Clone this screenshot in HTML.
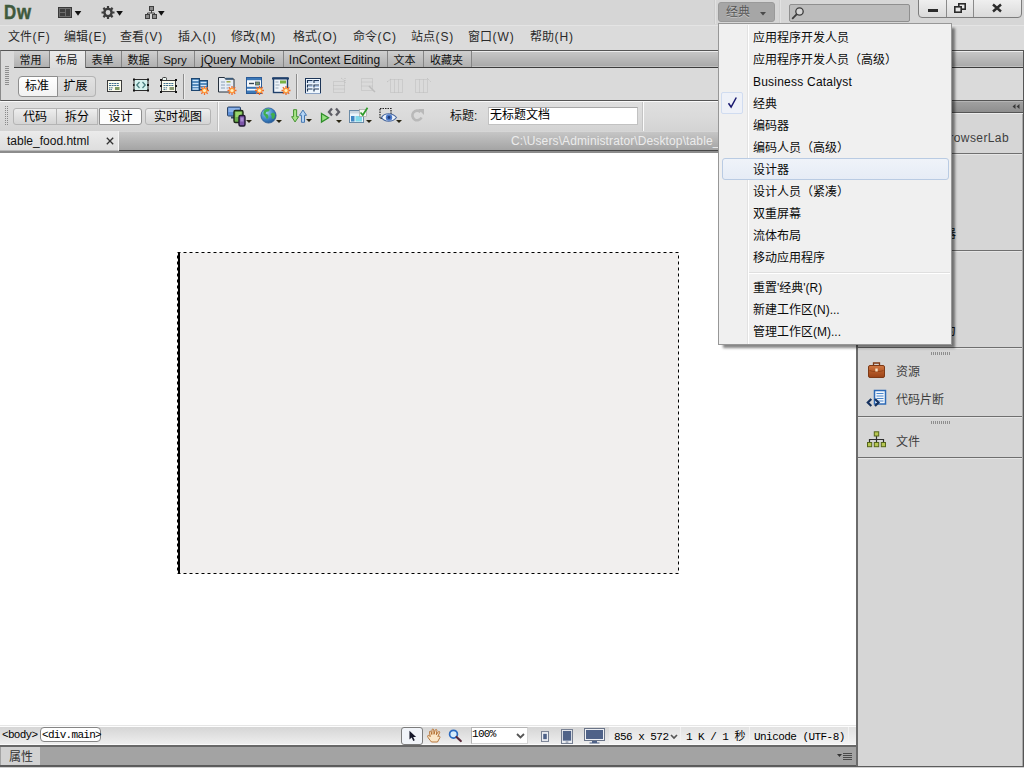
<!DOCTYPE html>
<html lang="zh-CN">
<head>
<meta charset="utf-8">
<title>Dreamweaver</title>
<style>
*{box-sizing:border-box;margin:0;padding:0}
html,body{width:1024px;height:768px;overflow:hidden;background:#d6d6d6}
body{position:relative;font-family:"Liberation Sans","Noto Sans CJK SC",sans-serif;font-size:12px;color:#1a1a1a}
.abs{position:absolute}
.t{position:absolute;white-space:nowrap;line-height:16px;height:16px}
svg{position:absolute;overflow:visible}
/* title bar */
#titlebar{left:0;top:0;width:1024px;height:25px;background:#d6d6d6}
#menubar{left:0;top:25px;width:1024px;height:25px;background:#dbdbdb;border-top:1px solid #e4e4e4}
.menu{top:29px;color:#2a2a2a}.k{letter-spacing:.9px;margin-left:.5px}
#logo{left:0;top:-2px;font-size:21px;font-weight:bold;color:#3f5a3d;line-height:28px;height:28px;-webkit-text-stroke:.5px #3f5a3d}#logo span{position:absolute;top:0;display:block;transform-origin:0 0}
#wsbtn{left:718px;top:2px;width:57px;height:20px;background:#a6a6a6;border:1px solid #9a9a9a;border-radius:3px}
#search{left:789px;top:4px;width:121px;height:18px;background:#bcbcbc;border:1px solid #8f8f8f;border-radius:2px}
#winbtns{left:918px;top:-1px;width:104px;height:19px;border:1px solid #7d7d7d;border-radius:0 0 4px 4px;background:linear-gradient(#efefef,#dadada)}
/* insert bar */
#insertbar{left:0;top:50px;width:1024px;height:51px;background:#dadada;border-top:1px solid #555;border-bottom:1px solid #555;border-left:1px solid #8a8a8a;border-right:1px solid #555}
#tabstrip{left:14px;top:51px;width:1009px;height:17px;background:linear-gradient(#ececec 0 1px,#c6c6c6 1px,#aaaaaa 15px,#c0c0c0 15px 16px);border-bottom:1px solid #3c3c3c}
.itab{position:absolute;top:51px;height:16px;border-right:1px solid #858585;background:linear-gradient(#cfcfcf,#b0b0b0);text-align:center;line-height:19px;font-size:11px;overflow:hidden;padding-right:2px;color:#111;white-space:nowrap}
.itab.on{background:linear-gradient(#ebebeb,#dcdcdc);height:17px;border-right:1px solid #777}
.grip{position:absolute;width:5px;background:repeating-linear-gradient(#8f8f8f 0 1px,transparent 1px 2px)}
.seg{position:absolute;top:76px;height:21px;border:1px solid #b4b4b4;text-align:center;line-height:18px;color:#000;padding-right:2px;background:linear-gradient(#e2e2e2,#d4d4d4)}
.vsep{position:absolute;width:2px;border-left:1px solid #8c8c8c;border-right:1px solid #ececec}
</style>
</head>
<body>
<!-- ============ title bar ============ -->
<div id="titlebar" class="abs"></div>
<div id="logo" class="t"><span style="left:3.600px;transform:scaleX(.8)">D</span><span style="left:16.800px;transform:scaleX(.86)">w</span></div>
<!-- layout icon -->
<svg style="left:58px;top:7px" width="22" height="12" viewBox="0 0 22 12">
  <rect x="0.5" y="0.5" width="13" height="10" fill="#6e6e6e" stroke="#3a3a3a"/>
  <rect x="2" y="2" width="5" height="3" fill="#3f3f3f"/><rect x="2" y="6" width="5" height="3" fill="#3f3f3f"/><rect x="8" y="2" width="4" height="7" fill="#3f3f3f"/>
  <path d="M16.700 4h6.600l-3.300 4.800z" fill="#111"/>
</svg>
<!-- gear -->
<svg style="left:102px;top:6px" width="22" height="13" viewBox="0 0 22 13">
  <circle cx="6" cy="6.5" r="3.6" fill="none" stroke="#3c3c3c" stroke-width="2.4"/>
  <g stroke="#3c3c3c" stroke-width="2.2"><path d="M6 0v2.4M6 10.6V13M-.5 6.5h2.4M10.1 6.5h2.4M1.4 1.9l1.7 1.7M8.9 9.4l1.7 1.7M1.4 11.1l1.7-1.7M8.9 3.6l1.7-1.7"/></g>
  <path d="M14.300 5h6.600l-3.300 4.800z" fill="#111"/>
</svg>
<!-- site -->
<svg style="left:145px;top:6px" width="22" height="13" viewBox="0 0 22 13">
  <g fill="#8a8a8a" stroke="#3f3f3f"><rect x="4.5" y="0.5" width="4" height="4"/><rect x="0.5" y="8.5" width="4" height="4"/><rect x="7.500" y="8.5" width="4" height="4"/></g>
  <path d="M6.5 5v2M2.500 8.500V7h7v1.500" fill="none" stroke="#3f3f3f"/>
  <path d="M13 5h6.600l-3.300 4.800z" fill="#111"/>
</svg>
<div class="abs" style="left:714px;top:0;width:2px;height:24px;border-left:1px solid #cdcdcd;border-right:1px solid #e2e2e2"></div>
<div class="abs" style="left:779px;top:0;width:2px;height:24px;border-left:1px solid #cdcdcd;border-right:1px solid #e2e2e2"></div>
<div id="wsbtn" class="abs"></div>
<div class="t" style="left:726px;top:4px;color:#585858;text-shadow:0 1px 0 #c4c4c4">经典</div>
<svg style="left:760px;top:12px" width="6" height="4"><path d="M0 0h6l-3 3.500z" fill="#4a4a4a"/></svg>
<div id="search" class="abs"></div>
<svg style="left:791px;top:6px" width="14" height="14" viewBox="0 0 14 14"><circle cx="8.500" cy="5.500" r="3.700" fill="#d4d4d4" stroke="#3c3c3c" stroke-width="1.300"/><path d="M5.800 8.200L1.200 12.800" stroke="#3c3c3c" stroke-width="1.800"/></svg>
<div id="winbtns" class="abs"></div>
<div class="abs" style="left:946px;top:0;width:1px;height:17px;background:#8a8a8a"></div>
<div class="abs" style="left:973px;top:0;width:1px;height:17px;background:#8a8a8a"></div>
<div class="abs" style="left:928px;top:9px;width:10px;height:3px;background:#2b2b2b"></div>
<svg style="left:954px;top:3px" width="12" height="10" viewBox="0 0 12 10"><rect x="4.800" y="0.800" width="6.400" height="5.400" fill="none" stroke="#2b2b2b" stroke-width="1.600"/><rect x="0.800" y="3.800" width="6.400" height="5.400" fill="#e6e6e6" stroke="#2b2b2b" stroke-width="1.600"/></svg>
<svg style="left:992px;top:4px" width="10" height="8" viewBox="0 0 10 8"><path d="M1 0.500L9 7.500M9 0.500L1 7.500" stroke="#2b2b2b" stroke-width="2.400"/></svg>

<!-- ============ menu bar ============ -->
<div id="menubar" class="abs"></div>
<div class="t menu" style="left:8px">文件<span class="k">(F)</span></div>
<div class="t menu" style="left:64px">编辑<span class="k">(E)</span></div>
<div class="t menu" style="left:120px">查看<span class="k">(V)</span></div>
<div class="t menu" style="left:178px">插入<span class="k">(I)</span></div>
<div class="t menu" style="left:231px">修改<span class="k">(M)</span></div>
<div class="t menu" style="left:293px">格式<span class="k">(O)</span></div>
<div class="t menu" style="left:353px">命令<span class="k">(C)</span></div>
<div class="t menu" style="left:411px">站点<span class="k">(S)</span></div>
<div class="t menu" style="left:468px">窗口<span class="k">(W)</span></div>
<div class="t menu" style="left:530px">帮助<span class="k">(H)</span></div>

<!-- ============ insert bar ============ -->
<div id="insertbar" class="abs"></div>
<div id="tabstrip" class="abs"></div>
<div class="itab" style="left:14px;width:36px">常用</div>
<div class="itab on" style="left:50px;width:36px">布局</div>
<div class="itab" style="left:86px;width:36px">表单</div>
<div class="itab" style="left:122px;width:36px">数据</div>
<div class="itab" style="left:158px;width:37px;font-size:11.500px;line-height:18px">Spry</div>
<div class="itab" style="left:195px;width:89px;font-size:12px;line-height:18px">jQuery Mobile</div>
<div class="itab" style="left:284px;width:104px;font-size:12px;line-height:18px">InContext Editing</div>
<div class="itab" style="left:388px;width:36px">文本</div>
<div class="itab" style="left:424px;width:48px">收藏夹</div>
<div class="grip" style="left:5px;top:66px;height:20px;width:4px"></div>
<div class="seg" style="left:18px;width:40px;background:linear-gradient(#ffffff,#f2f2f2);border-radius:4px 0 0 4px;border-color:#8e8e8e">标准</div>
<div class="seg" style="left:57px;width:39px;border-radius:0 4px 4px 0;border-left-color:#8e8e8e">扩展</div>
<!-- insert bar icons -->
<svg style="left:107px;top:80px" width="15" height="12" viewBox="0 0 15 12">
  <rect x="0.500" y="0.500" width="14" height="11" fill="#fbfbee" stroke="#3a3a3a"/>
  <path d="M2 3.500h10M2 5.500h10" stroke="#3f6f8f" stroke-dasharray="2 .6"/>
  <path d="M2 7.800h4M2 9.600h3" stroke="#3f6f8f" stroke-dasharray="1.500 .6"/>
  <rect x="8" y="7" width="4.500" height="3" fill="#7f9a62"/>
</svg>
<svg style="left:133px;top:78px" width="16" height="14" viewBox="0 0 16 14">
  <rect x="1" y="1.500" width="14" height="11" fill="#d6f2ef" stroke="#2a2a2a"/>
  <path d="M6.500 4L3.800 7l2.700 3M9.500 4l2.700 3-2.700 3" fill="none" stroke="#4c8080" stroke-width="1.300"/>
  <g fill="#111"><rect x="0" y="0.500" width="2" height="2"/><rect x="14" y="0.500" width="2" height="2"/><rect x="0" y="11.500" width="2" height="2"/><rect x="14" y="11.500" width="2" height="2"/><rect x="14" y="6" width="2" height="2"/><rect x="0" y="6" width="1.500" height="2"/></g>
</svg>
<svg style="left:160px;top:77px" width="17" height="16" viewBox="0 0 17 16">
  <rect x="2.500" y="0.500" width="4" height="3" rx="1" fill="#e8f2ee" stroke="#3a3a3a"/>
  <rect x="1.500" y="3.500" width="14" height="11" fill="#fbfbee" stroke="#3a3a3a"/>
  <path d="M3.500 6.500h10M3.500 8.500h10" stroke="#3f6f8f" stroke-dasharray="2 .6"/>
  <path d="M3.500 10.800h4M3.500 12.600h3" stroke="#3f6f8f" stroke-dasharray="1.500 .6"/>
  <rect x="9.500" y="10" width="4.500" height="3" fill="#8a9a72"/>
  <g fill="#111"><rect x="0" y="2" width="2" height="2"/><rect x="15" y="2" width="2" height="2"/><rect x="0" y="14" width="2" height="2"/><rect x="15" y="14" width="2" height="2"/><rect x="0" y="8" width="2" height="2"/><rect x="15" y="8" width="2" height="2"/></g>
</svg>
<div class="vsep" style="left:183px;top:74px;height:25px"></div>
<!-- spry menu bar -->
<svg style="left:191px;top:78px" width="19" height="18" viewBox="0 0 19 18">
  <rect x="0.500" y="0.500" width="8" height="12" fill="#2f6ea8" stroke="#1d4670"/>
  <path d="M1.500 2.500h6M1.500 5.500h6M1.500 8.500h6M1.500 11h6" stroke="#cfe6fb" stroke-width="1.600"/>
  <rect x="8.500" y="2.500" width="8" height="9" fill="#2f6ea8" stroke="#1d4670"/>
  <path d="M9.500 4.500h6M9.500 7.500h6M9.500 10h6" stroke="#cfe6fb" stroke-width="1.600"/>
  <g transform="translate(13.500 12.500)"><path d="M0-4.500v9M-4.500 0h9M-3.200-3.200l6.400 6.400M-3.200 3.200l6.400-6.400" stroke="#ee6a2a" stroke-width="1.300"/><circle r="2.800" fill="#ff9a3c"/><circle r="1.600" fill="#fff0c0"/></g>
</svg>
<!-- spry tabbed panels -->
<svg style="left:218px;top:77px" width="20" height="19" viewBox="0 0 20 19">
  <path d="M0.500 0.500h6l1 1.500h8.500v13h-15.500z" fill="#e8eef6" stroke="#26303c"/>
  <rect x="7.500" y="0.800" width="7.500" height="1.800" fill="#3a5a7a"/>
  <path d="M3 5h4M3 8h4M3 11h4" stroke="#8aa0b8"/><path d="M8.500 4.800h4" stroke="#9aa83a" stroke-width="1.400"/><path d="M8.500 8h4M8.500 11h2" stroke="#8aa0b8"/>
  <g transform="translate(14 13.500)"><path d="M0-4.500v9M-4.500 0h9M-3.200-3.200l6.400 6.400M-3.200 3.200l6.400-6.400" stroke="#ee6a2a" stroke-width="1.300"/><circle r="2.800" fill="#ff9a3c"/><circle r="1.600" fill="#fff0c0"/></g>
</svg>
<!-- spry accordion -->
<svg style="left:246px;top:77px" width="20" height="19" viewBox="0 0 20 19">
  <rect x="0.500" y="0.500" width="15" height="16" fill="#f6f9fc" stroke="#2a5a96"/>
  <rect x="1" y="1" width="14" height="2.200" fill="#3b78b8"/><rect x="1" y="9.800" width="14" height="2" fill="#3b78b8"/><rect x="1" y="13.500" width="14" height="2.500" fill="#3b78b8"/>
  <path d="M3 6.500h5" stroke="#345" stroke-width="1.400"/><rect x="9.500" y="5" width="4" height="3" fill="#7d9a6a" stroke="#456" stroke-width=".8"/>
  <g transform="translate(13.500 13.500)"><path d="M0-4.500v9M-4.500 0h9M-3.200-3.200l6.400 6.400M-3.200 3.200l6.400-6.400" stroke="#ee6a2a" stroke-width="1.300"/><circle r="2.800" fill="#ff9a3c"/><circle r="1.600" fill="#fff0c0"/></g>
</svg>
<!-- spry collapsible panel -->
<svg style="left:272px;top:77px" width="20" height="19" viewBox="0 0 20 19">
  <rect x="1.500" y="1" width="14" height="14.500" fill="#eef3f8" stroke="#1f3f6a" stroke-width="1.400"/>
  <rect x="0" y="0.500" width="17" height="2" fill="#1f3f6a"/>
  <rect x="8" y="3.500" width="6" height="3" fill="#78b044"/>
  <path d="M3.500 5h3M3.500 8h4M3.500 11h3" stroke="#9ab"/>
  <g transform="translate(14 13.500)"><path d="M0-4.500v9M-4.500 0h9M-3.200-3.200l6.400 6.400M-3.200 3.200l6.400-6.400" stroke="#ee6a2a" stroke-width="1.300"/><circle r="2.800" fill="#ff9a3c"/><circle r="1.600" fill="#fff0c0"/></g>
</svg>
<div class="vsep" style="left:296px;top:74px;height:25px"></div>
<!-- table -->
<svg style="left:305px;top:78px" width="16" height="16" viewBox="0 0 16 16">
  <rect x="0.500" y="0.500" width="15" height="15" fill="#eef6fd" stroke="#1d3557"/>
  <path d="M0 15.500h16" stroke="#8aa2c4"/>
  <path d="M2.500 5v-2.500h5M9 5v-2.500h5M2.500 9.500v-2.500h5M9 9.500v-2.500h5M2.500 13.500v-2.500h5M9 13.500v-2.500h5" fill="none" stroke="#1d3557" stroke-width="1.200"/>
  <path d="M3.500 4h4M10 4h4M3.500 8.500h4M10 8.500h4" stroke="#a9c4e8"/>
</svg>
<!-- disabled icons -->
<svg style="left:332px;top:77px" width="17" height="17" viewBox="0 0 17 17"><g fill="none" stroke="#bcbcbc" stroke-dasharray="1 1"><rect x="1.500" y="4.500" width="11" height="11"/><path d="M1.500 8.500h11M1.500 12h11M9 1l4 3M13 1v5"/></g></svg>
<svg style="left:360px;top:77px" width="17" height="17" viewBox="0 0 17 17"><g fill="none" stroke="#bcbcbc" stroke-dasharray="1 1"><rect x="1.500" y="1.500" width="11" height="12"/><path d="M1.500 5h11M1.500 9h11"/></g><path d="M9 9l6 6" stroke="#bdbdbd" stroke-width="1.500"/></svg>
<svg style="left:387px;top:77px" width="18" height="17" viewBox="0 0 18 17"><g fill="none" stroke="#bcbcbc" stroke-dasharray="1 1"><rect x="3.500" y="2.500" width="12" height="13"/><path d="M7.500 2.500v13M11.500 2.500v13M0 5l4-3"/></g></svg>
<svg style="left:414px;top:77px" width="18" height="17" viewBox="0 0 18 17"><g fill="none" stroke="#bcbcbc" stroke-dasharray="1 1"><rect x="1.500" y="2.500" width="12" height="13"/><path d="M5.500 2.500v13M9.500 2.500v13M13 1l4 4"/></g></svg>
<!-- ============ document toolbar ============ -->
<style>
#doctb{left:0;top:101px;width:856px;height:30px;background:linear-gradient(#fafafa 0 1px,#dfdfdf 1px,#dadada 55%,#d3d3d3 100%)}
.vbtn{position:absolute;top:108px;height:17px;border:1px solid #b4b4b4;background:linear-gradient(#eeeeee,#d4d4d4);text-align:center;line-height:16px;color:#000;white-space:nowrap}
.vgrip{position:absolute;width:1px;background:repeating-linear-gradient(#8a8a8a 0 1px,transparent 1px 2px)}
.dar{position:absolute;width:0;height:0;border-left:3px solid transparent;border-right:3px solid transparent;border-top:3.500px solid #2a2614}
#doctabs{left:0;top:131px;width:856px;height:22px;background:linear-gradient(#d6d6d6 0 1px,#c6c6c6 1px,#a4a4a4 19px,#484848 19px 20px,#8c8c8c 20px)}
#doctab{left:0;top:131px;width:119px;height:20px;background:linear-gradient(#ebebeb,#dedede);border-right:1px solid #f4f4f4;border-bottom:1px solid #b8b8b8}
#doc{left:0;top:153px;width:856px;height:572px;background:#fff}
#status{left:0;top:725px;width:856px;height:20px;background:linear-gradient(#e6e6e6 0 1px,#fdfdfd 1px 2px,#d5d5d5 2px,#eeeeee 19px,#fafafa 19px)}
#props{left:0;top:745px;width:856px;height:21px;background:#a3a3a3;border-top:2px solid #686868;border-bottom:1px solid #5a5a5a}
.mono{font-family:"Liberation Mono","Noto Sans CJK SC",monospace;font-size:11px;color:#000}
</style>
<div id="doctb" class="abs"></div>
<div class="vgrip" style="left:5px;top:106px;height:20px"></div>
<div class="vgrip" style="left:7px;top:106px;height:20px"></div>
<div class="vbtn" style="left:13px;width:44px;border-radius:3px 0 0 3px">代码</div>
<div class="vbtn" style="left:56px;width:42px">拆分</div>
<div class="vbtn" style="left:99px;width:43px;background:#fdfdfd;border-color:#8e8e8e;border-radius:0 3px 3px 0">设计</div>
<div class="vbtn" style="left:145px;width:66px;border-radius:3px">实时视图</div>
<div class="vsep" style="left:217px;top:102px;height:29px;border-left-color:#c0c0c0;border-right-color:#f8f8f8"></div>
<!-- multiscreen -->
<svg style="left:227px;top:106px" width="20" height="21" viewBox="0 0 20 21">
  <rect x="0.500" y="1" width="13" height="9" rx="1" fill="#5d8fd6" stroke="#2d4568"/><rect x="1.500" y="2" width="11" height="4" fill="#8db4ea"/><path d="M4 10.500h3v2h-3z" fill="#2d4568"/>
  <rect x="7" y="4.500" width="9" height="12" rx="1.500" fill="#6bb04a" stroke="#1e2a18" stroke-width="1.400"/><rect x="8.500" y="6" width="6" height="5" fill="#9ad36e"/>
  <rect x="12" y="9.500" width="6" height="10.500" rx="1.500" fill="#7c55a8" stroke="#1f1730" stroke-width="1.400"/><rect x="13.500" y="11.500" width="3" height="4" fill="#a98bd0"/>
</svg>
<div class="dar" style="left:246px;top:120px"></div>
<!-- globe -->
<svg style="left:260px;top:107px" width="17" height="17" viewBox="0 0 17 17">
  <defs><radialGradient id="gl" cx=".35" cy=".3" r=".8"><stop offset="0" stop-color="#9fd0f4"/><stop offset=".55" stop-color="#3f86c8"/><stop offset="1" stop-color="#1d4f8c"/></radialGradient></defs>
  <circle cx="8.500" cy="8.500" r="7.600" fill="url(#gl)" stroke="#2a5c96" stroke-width=".8"/>
  <path d="M5 2.500c2-1.200 4-.8 5 .2l-1.500 1.800-2 .3-1 1.700 2.500 1.200.5 2.500-1.500 2-1.500-2.500-2-2.500c-.3-2 .3-3.600 1.500-4.700zM10.500 7l2.500-1.500 2 1.500c.3 2-.5 4-1.800 5.200l-1.700-1.200.3-2z" fill="#3fae4e"/>
</svg>
<div class="dar" style="left:276px;top:120px"></div>
<!-- file mgmt arrows -->
<svg style="left:291px;top:108.500px" width="16.500" height="14" viewBox="0 0 18 16">
  <path d="M2.500 0.800h3.500v8h2.300L4.200 14.800 0.300 8.800h2.200z" fill="#a6e486" stroke="#3f8f2c" stroke-width="1.100"/>
  <path d="M11.500 15.200h3.500v-8h2.300L13.200 1.200 9.300 7.200h2.200z" fill="#b4d4f4" stroke="#3f74ae" stroke-width="1.100"/>
</svg>
<div class="dar" style="left:306px;top:119px"></div>
<!-- preview/debug -->
<svg style="left:320px;top:107px" width="22" height="17" viewBox="0 0 22 17">
  <path d="M1.500 6.500l7 4.300-7 4.300z" fill="#96e080" stroke="#2f8f2a" stroke-width="1.300"/>
  <path d="M12 1.500L9 5l3 3.500M16 1.500L19 5l-3 3.500" fill="none" stroke="#5e5e66" stroke-width="2.300"/>
</svg>
<div class="dar" style="left:336px;top:120px"></div>
<!-- validate -->
<svg style="left:349px;top:107px" width="20" height="17" viewBox="0 0 20 17">
  <rect x="0.500" y="3.500" width="14" height="12" fill="#eaf4fb" stroke="#6a8aa6"/>
  <rect x="1" y="4" width="13" height="2.500" fill="#c9d5df"/>
  <rect x="2" y="9" width="3.500" height="5.500" fill="#3f86c4"/><rect x="6.500" y="9" width="6.500" height="5.500" fill="#7fd8e8"/>
  <rect x="10.500" y="2.500" width="7" height="7" fill="#f7f7f2" stroke="#9a9a9a" stroke-width=".6"/>
  <path d="M11.500 5.500l2.300 2.500L18.500 0.800" fill="none" stroke="#2f9a2a" stroke-width="1.700"/>
</svg>
<div class="dar" style="left:366px;top:120px"></div>
<!-- visual aids -->
<svg style="left:379px;top:107px" width="22" height="17" viewBox="0 0 22 17">
  <rect x="1" y="1.500" width="11" height="10" fill="none" stroke="#222" stroke-dasharray="1.500 1" stroke-width="1.200"/>
  <path d="M2.500 10.500c3-5 11-5 15 0-4 5-12 5-15 0z" fill="#eef4fb" stroke="#4a6aa0" stroke-width="1.200"/>
  <circle cx="10" cy="10.500" r="3.200" fill="#4a78c8"/><circle cx="10" cy="10.500" r="1.400" fill="#1d3a78"/>
</svg>
<div class="dar" style="left:396px;top:120px"></div>
<!-- refresh disabled -->
<svg style="left:410px;top:108px" width="15" height="14" viewBox="0 0 15 14">
  <path d="M11.500 9.500a4.800 4.800 0 1 1-1-5.500" fill="none" stroke="#b9b9b9" stroke-width="2.600"/><path d="M8 1h6v6z" fill="#b9b9b9"/>
</svg>
<div class="t" style="left:450px;top:108px;color:#111">标题:</div>
<div class="abs" style="left:488px;top:107px;width:150px;height:18px;background:#fff;border:1px solid #c2c2c2;border-top-color:#a8a8a8"></div>
<div class="t" style="left:490px;top:107px;color:#000">无标题文档</div>
<div class="vsep" style="left:642px;top:102px;height:29px;border-left-color:#c4c4c4;border-right-color:#fbfbfb"></div>

<!-- ============ document tabs ============ -->
<div id="doctabs" class="abs"></div>
<div id="doctab" class="abs"></div>
<div class="t" style="left:7px;top:133px;color:#111">table_food.html</div>
<svg style="left:106px;top:137px" width="8" height="8" viewBox="0 0 8 8"><path d="M0.800 0.800l6.400 6.400M7.200 0.800L0.800 7.200" stroke="#333" stroke-width="1.300"/></svg>
<div class="t" style="left:511px;top:133px;color:#ececec;font-size:12px;letter-spacing:.12px">C:\Users\Administrator\Desktop\table_food.html</div>

<!-- ============ document ============ -->
<div id="doc" class="abs"></div>
<svg style="left:177px;top:252px" width="502" height="322" viewBox="0 0 502 322">
  <rect x="0.500" y="0.500" width="501" height="321" fill="#f1efee" stroke="#000" stroke-dasharray="3 3"/>
  <rect x="1" y="0" width="2" height="322" fill="#000"/>
</svg>

<!-- ============ status bar ============ -->
<div id="status" class="abs"></div>
<div class="t mono" style="left:2px;top:727px;letter-spacing:-.7px">&lt;body&gt;</div>
<div class="abs" style="left:40px;top:727px;width:61px;height:15px;background:#fff;border:1px solid #858585;border-radius:4px"></div>
<div class="t mono" style="left:42px;top:727px;letter-spacing:-.7px">&lt;div.main&gt;</div>
<div class="abs" style="left:401px;top:727px;width:22px;height:18px;background:#f1f4f9;border:1px solid #7c7c7c;border-radius:3px"></div>
<svg style="left:409px;top:730px" width="8" height="12" viewBox="0 0 9 13"><path d="M0.500 0.500v10l2.500-2.300 1.800 4 1.700-.8-1.800-3.800h3.300z" fill="#16182a"/></svg>
<!-- hand -->
<svg style="left:427px;top:728px" width="15" height="15" viewBox="0 0 15 15">
  <path d="M4.500 14C3 12 1 10 0.600 8.200c0-1.200 1.600-1.100 2.600.4L2.500 4.200c-.2-1.200 1.300-1.500 1.600-.3l.7 2.600L5 2c0-1.300 1.700-1.300 1.800 0l.2 4.300L8.200 2.200c.3-1.200 1.900-.9 1.700.3L9.300 6.800l1.900-2.900c.7-1 2-.2 1.400.8L10.800 8.500c1.500-.8 3 .3 2 1.200L10.500 14z" fill="#fae6c8" stroke="#b06a2a" stroke-width=".9" stroke-linejoin="round"/>
</svg>
<!-- zoom -->
<svg style="left:448px;top:729px" width="15" height="14" viewBox="0 0 15 14"><circle cx="5.500" cy="5.200" r="3.900" fill="#d6ecfc" stroke="#2a6ac0" stroke-width="1.700"/><path d="M8.500 8l4.300 4" stroke="#5a2a3a" stroke-width="2.200" stroke-linecap="round"/></svg>
<div class="abs" style="left:471px;top:727px;width:57px;height:17px;background:#fff;border:1px solid #d4d4d4;border-top-color:#b4b4b4;border-left-color:#b4b4b4"></div>
<div class="t mono" style="left:472px;top:726px;letter-spacing:-.7px">100%</div>
<svg style="left:516px;top:733px" width="9" height="6" viewBox="0 0 9 6"><path d="M1 1l3.500 3.500L8 1" fill="none" stroke="#555" stroke-width="1.800"/></svg>
<!-- device icons -->
<svg style="left:541px;top:731px" width="8" height="11" viewBox="0 0 9 12"><rect x="0.500" y="0.500" width="8" height="11" fill="#eef0f4" stroke="#6a7488"/><rect x="2.500" y="3" width="4" height="6" fill="#4f6288"/></svg>
<svg style="left:561px;top:729px" width="12" height="15" viewBox="0 0 13 16"><rect x="0.500" y="0.500" width="12" height="15" fill="#eef0f4" stroke="#6a7488"/><rect x="2" y="2" width="9" height="10.500" fill="#4f6288"/><rect x="5" y="13.500" width="3" height="1" fill="#6a7488"/></svg>
<svg style="left:584px;top:728px" width="21" height="16" viewBox="0 0 21 16"><rect x="0.500" y="0.500" width="20" height="12" fill="#eef0f4" stroke="#6a7488"/><rect x="2" y="2" width="17" height="9" fill="#4f6288"/><path d="M8 13h5v1.500h2.500v1H5.500v-1H8z" fill="#4f6288"/></svg>
<div class="abs" style="left:609px;top:727px;width:247px;height:18px;background:rgba(255,255,255,.3)"></div>
<div class="t mono" style="left:614px;top:729px;letter-spacing:-.55px">856 x 572</div>
<svg style="left:670px;top:734px" width="8" height="6" viewBox="0 0 8 6"><path d="M1 1l3 3 3-3" fill="none" stroke="#555" stroke-width="1.700"/></svg>
<div class="abs" style="left:680px;top:727px;width:1px;height:17px;background:#f2f2f2"></div>
<div class="t mono" style="left:686px;top:729px;letter-spacing:-.55px">1 K / 1 秒</div>
<div class="abs" style="left:749px;top:727px;width:1px;height:17px;background:#f2f2f2"></div>
<div class="t mono" style="left:754px;top:729px;letter-spacing:-.55px">Unicode (UTF-8)</div>
<div class="abs" style="left:848px;top:727px;width:1px;height:17px;background:#f2f2f2"></div>

<!-- ============ properties ============ -->
<div id="props" class="abs"></div>
<div class="abs" style="left:1px;top:747px;width:39px;height:18px;background:#d2d2d2"></div>
<div class="t" style="left:9px;top:749px;color:#333">属性</div>
<svg style="left:837px;top:753px" width="15" height="7" viewBox="0 0 15 7"><path d="M0 1h5l-2.500 3z" fill="#333"/><path d="M6 0.500h9M6 2.500h9M6 4.500h9M6 6.500h9" stroke="#4a4a4a"/></svg>
<div class="abs" style="left:0;top:766px;width:1024px;height:2px;background:#d0d0d0;border-top:1px solid #5c5c5c"></div>
<!-- ============ right panel ============ -->
<style>
#rp{left:856px;top:101px;width:168px;height:665px;background:#d6d6d6;border-left:2px solid #6b6b6b;border-right:1px solid #555;box-shadow:inset -1px 0 0 #a8a8a8}
#rphead{left:858px;top:101px;width:165px;height:13px;background:linear-gradient(#b4b4b4 0 1px,#a0a0a0 1px,#8e8e8e 11px,#555 11px 12px,#ececec 12px)}
.pl{position:absolute;left:858px;width:164px;height:2px;border-top:1px solid #6f6f6f;border-bottom:1px solid #e6e6e6}
.pgrip{position:absolute;left:931px;width:20px;height:3px;background:repeating-linear-gradient(90deg,#8e8e8e 0 1px,transparent 1px 2px)}
.pt{position:absolute;left:896px;white-space:nowrap;line-height:16px;color:#3e3e3e}
#dd{left:718px;top:23px;width:234px;height:322px;background:#f0f0f0;border:1px solid #979797;box-shadow:4px 4px 2.500px -1px rgba(0,0,0,.48)}
.mi{position:absolute;left:753px;color:#0a0a0a;line-height:16px;white-space:nowrap}
</style>
<div id="rp" class="abs"></div>
<div id="rphead" class="abs"></div>
<svg style="left:1012px;top:104px" width="8" height="5" viewBox="0 0 8 5"><path d="M3.500 0v5L0.500 2.500zM7.500 0v5L4.500 2.500z" fill="#3a3a3a"/></svg>
<div class="pgrip" style="top:117px"></div>
<div class="pt" style="left:auto;right:15px;top:130px;font-size:12px;letter-spacing:.4px">Adobe BrowserLab</div>
<div class="pl" style="top:153px"></div>
<div class="pgrip" style="top:158px"></div>
<div class="pt" style="top:170px">CSS样式</div>
<div class="pt" style="top:198px">AP 元素</div>
<div class="pt" style="top:226px;color:#111">标签检查器</div>
<div class="pl" style="top:250px"></div>
<div class="pgrip" style="top:255px"></div>
<div class="pt" style="top:267px">数据库</div>
<div class="pt" style="top:295px">绑定</div>
<div class="pt" style="top:323px;color:#111">服务器行为</div>
<div class="pl" style="top:347px"></div>
<div class="pgrip" style="top:352px"></div>
<!-- assets -->
<svg style="left:868px;top:362px" width="17" height="16" viewBox="0 0 17 16">
  <defs><linearGradient id="bc" x1="0" y1="0" x2="0" y2="1"><stop offset="0" stop-color="#d27a46"/><stop offset=".45" stop-color="#b85c2a"/><stop offset="1" stop-color="#9a4318"/></linearGradient></defs>
  <path d="M5.500 3.500V1h6v2.500" fill="none" stroke="#7e3a16" stroke-width="1.300"/>
  <rect x="0.500" y="3.500" width="16" height="12" rx="1.500" fill="url(#bc)" stroke="#7e3a16"/>
  <path d="M1.500 8.500c3 1.500 11 1.500 14 0" fill="none" stroke="#8a3f18" stroke-width=".8"/>
  <rect x="7.300" y="6.500" width="2.400" height="3" fill="#f8e2c4"/>
</svg>
<div class="pt" style="top:364px">资源</div>
<!-- snippets -->
<svg style="left:866px;top:389px" width="21" height="19" viewBox="0 0 21 19">
  <rect x="8.500" y="1.500" width="11" height="13.500" fill="#f2f7fd" stroke="#2d6ab6" stroke-width="1.500"/>
  <path d="M10.500 4.500h7M10.500 7h7M10.500 9.500h7M10.500 12h7" stroke="#4a86cc" stroke-width="1.200"/>
  <path d="M5.300 10L1.800 13.500l3.500 3.500M9 10l3.500 3.500L9 17" fill="none" stroke="#15315e" stroke-width="2.200"/>
</svg>
<div class="pt" style="top:392px">代码片断</div>
<div class="pl" style="top:416px"></div>
<div class="pgrip" style="top:421px"></div>
<!-- files -->
<svg style="left:867px;top:431px" width="20" height="17" viewBox="0 0 20 17">
  <path d="M9.500 5v3.500M2.500 12V8.500h14V12M9.500 8.500V12" fill="none" stroke="#2e2e2e" stroke-width="1.200"/>
  <g fill="#b7c652" stroke="#55661a"><rect x="7.300" y="0.800" width="4.400" height="4.200"/><rect x="0.500" y="11.500" width="4.200" height="4.200"/><rect x="7.300" y="11.500" width="4.400" height="4.200"/><rect x="14.300" y="11.500" width="4.200" height="4.200"/></g>
</svg>
<div class="pt" style="top:434px">文件</div>
<div class="pl" style="top:457px"></div>

<!-- ============ workspace dropdown ============ -->
<div id="dd" class="abs"></div>
<div class="abs" style="left:747px;top:25px;width:2px;height:319px;border-left:1px solid #e2e2e2;border-right:1px solid #ffffff"></div>
<div class="abs" style="left:722px;top:158px;width:227px;height:22px;border:1px solid #b9cbe3;border-radius:3px;background:linear-gradient(#eff3f9,#e6ecf6)"></div>
<div class="abs" style="left:721px;top:92px;width:22px;height:22px;border:1px solid #d0dcf0;border-radius:2px;background:#eef1f8"></div>
<svg style="left:727px;top:96px" width="11" height="13" viewBox="0 0 11 13"><path d="M1.500 7.300l2.600 3.700L9.300 1.500" fill="none" stroke="#17176e" stroke-width="1.500"/></svg>
<div class="mi" style="top:30px">应用程序开发人员</div>
<div class="mi" style="top:52px">应用程序开发人员（高级）</div>
<div class="mi" style="top:74px" ><span style="letter-spacing:.22px">Business Catalyst</span></div>
<div class="mi" style="top:96px">经典</div>
<div class="mi" style="top:118px">编码器</div>
<div class="mi" style="top:140px">编码人员（高级）</div>
<div class="mi" style="top:162px">设计器</div>
<div class="mi" style="top:184px">设计人员（紧凑）</div>
<div class="mi" style="top:206px">双重屏幕</div>
<div class="mi" style="top:228px">流体布局</div>
<div class="mi" style="top:250px">移动应用程序</div>
<div class="abs" style="left:749px;top:272px;width:201px;height:2px;border-top:1px solid #dfdfdf;border-bottom:1px solid #ffffff"></div>
<div class="mi" style="top:280px">重置'经典'(R)</div>
<div class="mi" style="top:302px">新建工作区(N)...</div>
<div class="mi" style="top:324px">管理工作区(M)...</div>
</body>
</html>
